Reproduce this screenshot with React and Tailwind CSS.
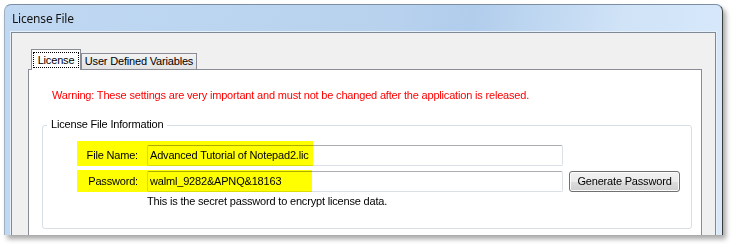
import React from "react";

const LicenseFileDialog = () => {
    return (
        <div className="w-[732px] h-[244px] bg-white overflow-hidden pt-[4px] pl-[4px] font-[Liberation_Sans,Arial,sans-serif] text-[11px] leading-[13px] tracking-[-0.18px] text-black">
            {/* window frame */}
            <div className="w-[719px] h-[231px] rounded-t-[7px] border-t border-l border-r border-t-[#7d8ea2] border-l-[#9fb0c2] border-r-[#3c3c3c] bg-[linear-gradient(100deg,#c0d8f2_0%,#b8d2ee_50%,#b1cdec_62%,#d0e3f7_82%,#d8e9fb_100%)] shadow-[3px_4px_5px_rgba(0,0,0,0.35)] flex flex-col overflow-hidden">
                <div className="h-[27px] shrink-0 flex items-center pl-[7px] font-[Noto_Sans,sans-serif] text-[12px] tracking-[-0.2px] text-[#141414]">
                    License File
                </div>

                <div className="flex-1 flex px-[6px] min-h-0">
                    {/* client area */}
                    <div className="flex-1 flex flex-col border-t border-l border-r border-[#7e8996] bg-[#f0f0f0] pt-[16px] pl-[16px] pr-[13px] shadow-[0_0_0_1px_#e6f0fb]">
                        {/* tab strip */}
                        <div className="flex items-end h-[21px] pl-[3px] -mb-px relative z-10">
                            <div className="w-[50px] h-[21px] border border-b-0 border-[#898c95] bg-white pt-[2px] px-px">
                                <div className="h-[16px] border border-dotted border-black flex items-center justify-center">
                                    License
                                </div>
                            </div>
                            <div className="w-[116px] h-[16px] mb-px border border-b-0 border-[#898c95] bg-[linear-gradient(to_bottom,#f3f3f3,#e2e2e2)] flex items-center justify-center">
                                User Defined Variables
                            </div>
                        </div>

                        {/* tab page */}
                        <div className="flex-1 border-t border-l border-r border-[#898c95] bg-white pt-[19px]">
                            <div className="pl-[23px] text-[#ff0000]">
                                Warning: These settings are very important and must not be changed after the application is released.
                            </div>

                            {/* group box */}
                            <div className="relative mt-[23px] ml-[13px] w-[650px] h-[104px] border border-[#d5dfe5] rounded-[3px] pt-[19px]">
                                <span className="absolute -top-[8px] left-[4px] px-[4px] bg-white">
                                    License File Information
                                </span>

                                <div className="relative flex items-center">
                                    <div className="w-[95px] text-right">File Name:</div>
                                    <div className="ml-[9px] w-[416px] h-[21px] flex items-center pl-[2px] bg-white border border-[#dbdfe6] border-t-[#abadb3] rounded-[2px]">
                                        Advanced Tutorial of Notepad2.lic
                                    </div>
                                    <div className="absolute left-[34px] -top-[4px] w-[236px] h-[25px] bg-[#ffff00] mix-blend-multiply pointer-events-none" />
                                </div>

                                <div className="relative flex items-center mt-[5px]">
                                    <div className="w-[95px] text-right">Password:</div>
                                    <div className="ml-[9px] w-[416px] h-[21px] flex items-center pl-[2px] bg-white border border-[#dbdfe6] border-t-[#abadb3] rounded-[2px]">
                                        walml_9282&amp;APNQ&amp;18163
                                    </div>
                                    <button className="ml-[6px] w-[111px] h-[21px] flex items-center justify-center border border-[#707070] rounded-[3px] bg-[linear-gradient(to_bottom,#f2f2f2_0%,#ebebeb_50%,#dddddd_51%,#cfcfcf_100%)] shadow-[inset_0_0_0_1px_#fbfbfb]">
                                        Generate Password
                                    </button>
                                    <div className="absolute left-[34px] -top-[1px] w-[235px] h-[22px] bg-[#ffff00] mix-blend-multiply pointer-events-none" />
                                </div>

                                <div className="mt-[3px] ml-[104px]">
                                    This is the secret password to encrypt license data.
                                </div>
                            </div>
                        </div>
                    </div>
                </div>
            </div>
        </div>
    );
};

export default function App() {
    return <LicenseFileDialog />;
}
